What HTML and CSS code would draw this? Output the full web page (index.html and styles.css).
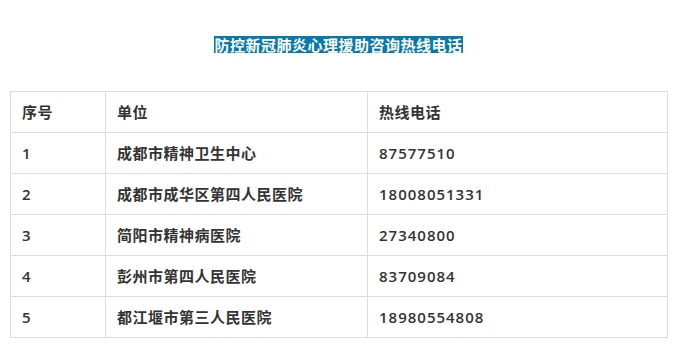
FILE: index.html
```html
<!DOCTYPE html>
<html lang="zh-CN">
<head>
<meta charset="utf-8">
<title>防控新冠肺炎心理援助咨询热线电话</title>
<link rel="stylesheet" href="styles.css">
</head>
<body>
<div class="page">
  <h1 class="title"><span class="title-mark">防控新冠肺炎心理援助咨询热线电话</span></h1>
  <table class="hotline">
    <colgroup>
      <col class="c-no">
      <col class="c-unit">
      <col class="c-phone">
    </colgroup>
    <tr><td>序号</td><td>单位</td><td>热线电话</td></tr>
    <tr><td class="num">1</td><td>成都市精神卫生中心</td><td class="num">87577510</td></tr>
    <tr><td class="num">2</td><td>成都市成华区第四人民医院</td><td class="num">18008051331</td></tr>
    <tr><td class="num">3</td><td>简阳市精神病医院</td><td class="num">27340800</td></tr>
    <tr><td class="num">4</td><td>彭州市第四人民医院</td><td class="num">83709084</td></tr>
    <tr><td class="num">5</td><td>都江堰市第三人民医院</td><td class="num">18980554808</td></tr>
  </table>
</div>
</body>
</html>
```
FILE: styles.css
```css
html, body {
  margin: 0;
  padding: 0;
  background: #ffffff;
}
.page {
  padding: 36px 12px 0 10px;
  font-family: "Open Sans", "Noto Sans CJK SC", sans-serif;
  color: #333333;
}
.title {
  margin: 0 0 38px 0;
  text-align: center;
  font-size: 15px;
  font-weight: 700;
  line-height: 17px;
  height: 17px;
}
.title-mark {
  display: inline-block;
  background: #0779ad;
  color: #ffffff;
  letter-spacing: 0.5px;
  height: 17px;
  line-height: 17px;
  font-family: "Noto Sans CJK SC", sans-serif;
}
.hotline {
  border-collapse: collapse;
  width: 657px;
  table-layout: fixed;
  font-size: 15px;
  font-weight: 600;
  letter-spacing: 0.5px;
}
.c-no { width: 95px; }
.c-unit { width: 262px; }
.c-phone { width: 300px; }
.hotline td {
  border: 1px solid #dddddd;
  height: 41px;
  padding: 0 0 0 11px;
  vertical-align: middle;
  box-sizing: border-box;
  line-height: 20px;
}
.hotline td.num {
  letter-spacing: 1px;
}
```
